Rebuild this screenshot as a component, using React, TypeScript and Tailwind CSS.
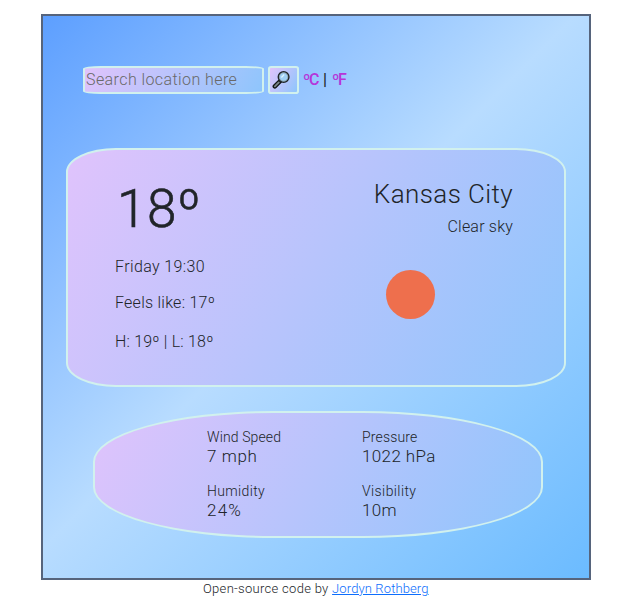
function SearchIcon() {
  return (
    <svg viewBox="0 0 20 20" className="h-5 w-5" aria-hidden="true">
      <path d="M2.8 16.4 8 11.2" stroke="#111416" strokeWidth="4.4" strokeLinecap="round" />
      <path d="M2.9 16.3 6.8 12.4" stroke="#7b868b" strokeWidth="1.9" strokeLinecap="round" />
      <circle cx="11.6" cy="7" r="5.3" fill="#9fcff5" stroke="#202528" strokeWidth="1.5" />
      <circle cx="11.6" cy="7" r="4.2" fill="none" stroke="#8a999f" strokeWidth=".7" />
      <path d="m9.4 7.5 2.8-3" stroke="#dff5ff" strokeWidth="1.2" />
    </svg>
  );
}

function Detail({ label, value, valueClass, labelClass }: {
  label: string;
  value: string;
  valueClass: string;
  labelClass: string;
}) {
  return (
    <div className="h-[54px] whitespace-nowrap">
      <div className={`text-[14px] leading-[18px] ${labelClass}`}>{label}</div>
      <div className={`text-[17px] leading-5 ${valueClass}`}>{value}</div>
    </div>
  );
}

export default function App() {
  return (
    <div className="h-[597px] w-[633px] overflow-hidden bg-white pt-3.5 font-['Roboto',sans-serif] font-light text-[#212529]">
      <main className="ml-[41px] h-[566px] w-[550px] border-2 border-[#56647c] bg-[linear-gradient(135deg,#5d9fff_0%,#b8dcff_48%,#6bbbff_100%)] pt-[50px]">
        <form className="ml-10 flex h-7 items-center" onSubmit={(e) => e.preventDefault()}>
          <input
            aria-label="Location"
            placeholder="Search location here"
            className="h-7 w-[181px] rounded-[10%] border-2 border-[#d1f1ee] bg-[linear-gradient(120deg,#e0c3fc_0%,#8ec5fc_100%)] pb-0.5 pl-[1px] text-[16px] font-light tracking-[0.42px] outline-none placeholder:text-[#696969]"
          />
          <button
            aria-label="Search"
            className="ml-1 flex h-7 w-[31px] items-center justify-center rounded-[10%] border-2 border-[#d1f1ee] bg-[linear-gradient(120deg,#e0c3fc_0%,#8ec5fc_100%)] pr-1"
          >
            <SearchIcon />
          </button>
          <div className="ml-1 flex text-[16px] font-medium leading-6 tracking-[-1.2px]">
            <span className="w-5 text-[#b535d9]">ºC</span>
            <span className="w-[9px]">|</span>
            <span className="text-[#b535d9]">ºF</span>
          </div>
        </form>

        <section className="ml-[23px] mt-[54px] flex h-[239px] w-[500px] justify-between rounded-[10%] border-2 border-[#d1f1ee] bg-[linear-gradient(120deg,#e0c3fc_0%,#8ec5fc_100%)] pl-[47px] pr-[51px]">
          <div className="whitespace-nowrap pt-[28px] text-[16px] leading-6">
            <div className="ml-0.5 h-[64px] text-[53px] leading-[62px] tracking-[0.6px] [-webkit-text-stroke:0.6px_#212529]">18º</div>
            <div className="mt-[13px] tracking-[0.38px]">Friday 19:30</div>
            <div className="mt-[12px] tracking-[0.25px]">Feels like: 17º</div>
            <div className="mt-[15px] tracking-[0.2px]">H: 19º | L: 18º</div>
          </div>
          <div className="w-[140px] whitespace-nowrap pt-[28px] text-right">
            <div className="text-[26px] leading-8 tracking-[0.4px]">Kansas City</div>
            <div className="mt-[5px] text-[16px] leading-6 tracking-[0.2px]">Clear sky</div>
            <div className="ml-[13px] mt-[31px] h-[49px] w-[49px] rounded-full bg-[#ee6f4d]" />
          </div>
        </section>

        <section className="ml-[50px] mt-6 grid h-[127px] w-[450px] grid-cols-[155px_1fr] content-start rounded-[40%] border-2 border-[#d1f1ee] bg-[linear-gradient(120deg,#e0c3fc_0%,#8ec5fc_100%)] pl-[112px] pt-[15px]">
          <Detail label="Wind Speed" value="7 mph" labelClass="tracking-[0.12px]" valueClass="tracking-[0.6px]" />
          <Detail label="Pressure" value="1022 hPa" labelClass="tracking-[0.15px]" valueClass="tracking-[0.38px]" />
          <Detail label="Humidity" value="24%" labelClass="tracking-[0.35px]" valueClass="tracking-[1.2px]" />
          <Detail label="Visibility" value="10m" labelClass="tracking-[0.4px]" valueClass="tracking-[0.3px]" />
        </section>
      </main>
      <footer className="ml-[203px] whitespace-nowrap text-[13px] leading-[17px] tracking-[0.3px]">
        Open-source code by <a href="#" className="tracking-[0.12px] text-[#0d6efd] underline">Jordyn Rothberg</a>
      </footer>
    </div>
  );
}
